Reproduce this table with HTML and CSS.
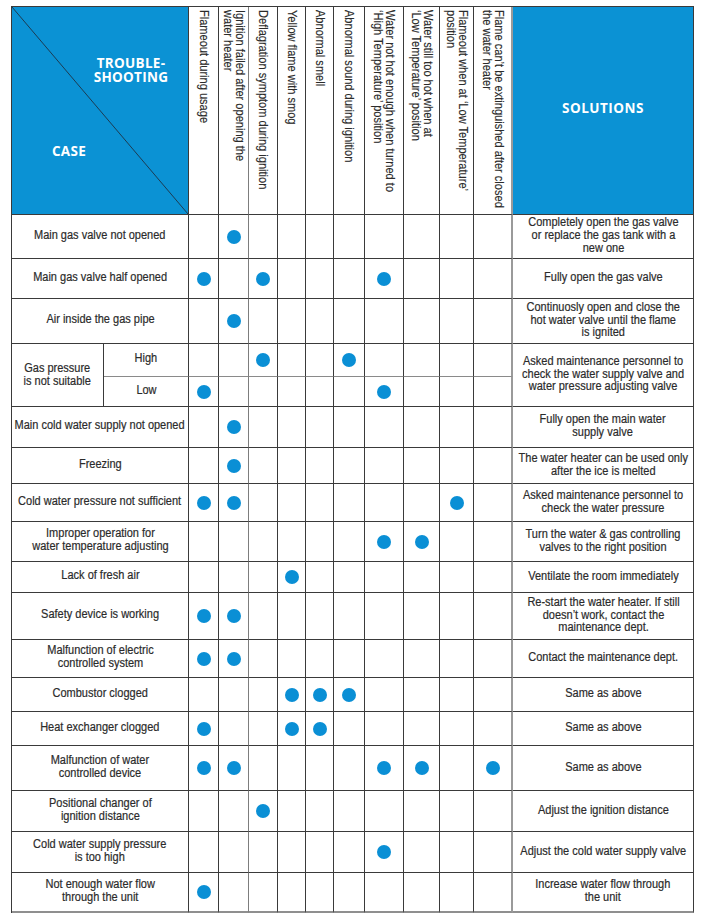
FILE: index.html
```html
<!DOCTYPE html>
<html lang="en">
<head>
<meta charset="utf-8">
<title>Troubleshooting</title>
<link rel="stylesheet" href="styles.css">
</head>
<body>
<div class="chart">
  <div class="corner">
    <svg class="diag" viewBox="0 0 100 100" preserveAspectRatio="none"><line x1="0" y1="0" x2="100" y2="100"/></svg>
    <span class="corner-top">TROUBLE-<br>SHOOTING</span>
    <span class="corner-bottom">CASE</span>
  </div>
  <div class="sym"><span>Flameout during usage</span></div>
  <div class="sym soft"><span>Ignition failed after opening the<br>water heater</span></div>
  <div class="sym"><span>Deflagration symptom during ignition</span></div>
  <div class="sym"><span>Yellow flame with smog</span></div>
  <div class="sym"><span>Abnormal smell</span></div>
  <div class="sym"><span>Abnormal sound during ignition</span></div>
  <div class="sym"><span>Water not hot enough when turned to<br>‘High Temperature’ position</span></div>
  <div class="sym"><span>Water still too hot when at<br>‘Low Temperature’ position</span></div>
  <div class="sym"><span>Flameout when at ‘Low Temperature’<br>position</span></div>
  <div class="sym edge"><span>Flame can’t be extinguished after closed<br>the water heater</span></div>
  <div class="sol-head">SOLUTIONS</div>

  <!-- 1 -->
  <div class="case"><span>Main gas valve not opened</span></div>
  <div class="c"></div><div class="c soft"><i class="dot"></i></div><div class="c"></div><div class="c"></div><div class="c"></div><div class="c"></div><div class="c"></div><div class="c"></div><div class="c"></div><div class="c edge"></div>
  <div class="sol"><span>Completely open the gas valve<br>or replace the gas tank with a<br>new one</span></div>

  <!-- 2 -->
  <div class="case"><span>Main gas valve half opened</span></div>
  <div class="c"><i class="dot"></i></div><div class="c soft"></div><div class="c"><i class="dot"></i></div><div class="c"></div><div class="c"></div><div class="c"></div><div class="c"><i class="dot"></i></div><div class="c"></div><div class="c"></div><div class="c edge"></div>
  <div class="sol"><span>Fully open the gas valve</span></div>

  <!-- 3 -->
  <div class="case"><span>Air inside the gas pipe</span></div>
  <div class="c"></div><div class="c soft"><i class="dot"></i></div><div class="c"></div><div class="c"></div><div class="c"></div><div class="c"></div><div class="c"></div><div class="c"></div><div class="c"></div><div class="c edge"></div>
  <div class="sol"><span>Continuosly open and close the<br>hot water valve until the flame<br>is ignited</span></div>

  <!-- 4 gas pressure -->
  <div class="case-group"><span>Gas pressure<br>is not suitable</span></div>
  <div class="case-sub thin"><span>High</span></div>
  <div class="c thin"></div><div class="c soft thin"></div><div class="c thin"><i class="dot"></i></div><div class="c thin"></div><div class="c thin"></div><div class="c thin"><i class="dot"></i></div><div class="c thin"></div><div class="c thin"></div><div class="c thin"></div><div class="c edge thin"></div>
  <div class="sol sol-span"><span>Asked maintenance personnel to<br>check the water supply valve and<br>water pressure adjusting valve</span></div>
  <div class="case-sub"><span>Low</span></div>
  <div class="c"><i class="dot"></i></div><div class="c soft"></div><div class="c"></div><div class="c"></div><div class="c"></div><div class="c"></div><div class="c"><i class="dot"></i></div><div class="c"></div><div class="c"></div><div class="c edge"></div>

  <!-- 5 -->
  <div class="case"><span>Main cold water supply not opened</span></div>
  <div class="c"></div><div class="c soft"><i class="dot"></i></div><div class="c"></div><div class="c"></div><div class="c"></div><div class="c"></div><div class="c"></div><div class="c"></div><div class="c"></div><div class="c edge"></div>
  <div class="sol"><span>Fully open the main water<br>supply valve</span></div>

  <!-- 6 -->
  <div class="case"><span>Freezing</span></div>
  <div class="c"></div><div class="c soft"><i class="dot"></i></div><div class="c"></div><div class="c"></div><div class="c"></div><div class="c"></div><div class="c"></div><div class="c"></div><div class="c"></div><div class="c edge"></div>
  <div class="sol"><span>The water heater can be used only<br>after the ice is melted</span></div>

  <!-- 7 -->
  <div class="case"><span>Cold water pressure not sufficient</span></div>
  <div class="c"><i class="dot"></i></div><div class="c soft"><i class="dot"></i></div><div class="c"></div><div class="c"></div><div class="c"></div><div class="c"></div><div class="c"></div><div class="c"></div><div class="c"><i class="dot"></i></div><div class="c edge"></div>
  <div class="sol"><span>Asked maintenance personnel to<br>check the water pressure</span></div>

  <!-- 8 -->
  <div class="case"><span>Improper operation for<br>water temperature adjusting</span></div>
  <div class="c"></div><div class="c soft"></div><div class="c"></div><div class="c"></div><div class="c"></div><div class="c"></div><div class="c"><i class="dot"></i></div><div class="c"><i class="dot"></i></div><div class="c"></div><div class="c edge"></div>
  <div class="sol"><span>Turn the water &amp; gas controlling<br>valves to the right position</span></div>

  <!-- 9 -->
  <div class="case"><span>Lack of fresh air</span></div>
  <div class="c"></div><div class="c soft"></div><div class="c"></div><div class="c"><i class="dot"></i></div><div class="c"></div><div class="c"></div><div class="c"></div><div class="c"></div><div class="c"></div><div class="c edge"></div>
  <div class="sol"><span>Ventilate the room immediately</span></div>

  <!-- 10 -->
  <div class="case"><span>Safety device is working</span></div>
  <div class="c"><i class="dot"></i></div><div class="c soft"><i class="dot"></i></div><div class="c"></div><div class="c"></div><div class="c"></div><div class="c"></div><div class="c"></div><div class="c"></div><div class="c"></div><div class="c edge"></div>
  <div class="sol"><span>Re-start the water heater. If still<br>doesn’t work, contact the<br>maintenance dept.</span></div>

  <!-- 11 -->
  <div class="case"><span>Malfunction of electric<br>controlled system</span></div>
  <div class="c"><i class="dot"></i></div><div class="c soft"><i class="dot"></i></div><div class="c"></div><div class="c"></div><div class="c"></div><div class="c"></div><div class="c"></div><div class="c"></div><div class="c"></div><div class="c edge"></div>
  <div class="sol"><span>Contact the maintenance dept.</span></div>

  <!-- 12 -->
  <div class="case"><span>Combustor clogged</span></div>
  <div class="c"></div><div class="c soft"></div><div class="c"></div><div class="c"><i class="dot"></i></div><div class="c"><i class="dot"></i></div><div class="c"><i class="dot"></i></div><div class="c"></div><div class="c"></div><div class="c"></div><div class="c edge"></div>
  <div class="sol"><span>Same as above</span></div>

  <!-- 13 -->
  <div class="case"><span>Heat exchanger clogged</span></div>
  <div class="c"><i class="dot"></i></div><div class="c soft"></div><div class="c"></div><div class="c"><i class="dot"></i></div><div class="c"><i class="dot"></i></div><div class="c"></div><div class="c"></div><div class="c"></div><div class="c"></div><div class="c edge"></div>
  <div class="sol"><span>Same as above</span></div>

  <!-- 14 -->
  <div class="case"><span>Malfunction of water<br>controlled device</span></div>
  <div class="c"><i class="dot"></i></div><div class="c soft"><i class="dot"></i></div><div class="c"></div><div class="c"></div><div class="c"></div><div class="c"></div><div class="c"><i class="dot"></i></div><div class="c"><i class="dot"></i></div><div class="c"></div><div class="c edge"><i class="dot"></i></div>
  <div class="sol"><span>Same as above</span></div>

  <!-- 15 -->
  <div class="case"><span>Positional changer of<br>ignition distance</span></div>
  <div class="c"></div><div class="c soft"></div><div class="c"><i class="dot"></i></div><div class="c"></div><div class="c"></div><div class="c"></div><div class="c"></div><div class="c"></div><div class="c"></div><div class="c edge"></div>
  <div class="sol"><span>Adjust the ignition distance</span></div>

  <!-- 16 -->
  <div class="case"><span>Cold water supply pressure<br>is too high</span></div>
  <div class="c"></div><div class="c soft"></div><div class="c"></div><div class="c"></div><div class="c"></div><div class="c"></div><div class="c"><i class="dot"></i></div><div class="c"></div><div class="c"></div><div class="c edge"></div>
  <div class="sol"><span>Adjust the cold water supply valve</span></div>

  <!-- 17 -->
  <div class="case last"><span>Not enough water flow<br>through the unit</span></div>
  <div class="c last"><i class="dot"></i></div><div class="c soft last"></div><div class="c last"></div><div class="c last"></div><div class="c last"></div><div class="c last"></div><div class="c last"></div><div class="c last"></div><div class="c last"></div><div class="c edge last"></div>
  <div class="sol last"><span>Increase water flow through<br>the unit</span></div>
</div>
</body>
</html>
```

FILE: styles.css
```css
html, body {
  margin: 0;
  padding: 0;
  background: #ffffff;
}

body {
  font-family: "Liberation Sans", Arial, sans-serif;
  color: #2b2b2b;
}

.chart {
  margin: 6px 0 0 11px;
  display: grid;
  grid-template-columns: 92px 85px 30px 30px 29px 28px 28px 31px 39px 36px 34px 39px 181px;
  grid-template-rows: 208px 44px 40px 45px 33px 30px 41px 36px 38px 40px 31px 47px 38px 34px 34px 45px 41px 41px 40px;
  width: max-content;
  border-top: 1px solid #3a3a3a;
  border-left: 1px solid #3a3a3a;
}

.chart > div {
  box-sizing: border-box;
  border-right: 1px solid #3a3a3a;
  border-bottom: 1px solid #3a3a3a;
}

/* header corner */
.corner {
  grid-column: span 2;
  position: relative;
  background: #0b92d4;
  font-family: "Open Sans", "Liberation Sans", sans-serif;
  font-weight: 700;
  color: #ffffff;
  font-size: 13.5px;
  line-height: 14px;
  letter-spacing: 0.3px;
}

.diag {
  position: absolute;
  left: 0;
  top: 0;
  width: 100%;
  height: 100%;
}

.diag line {
  stroke: #1d3b52;
  stroke-width: 1;
  vector-effect: non-scaling-stroke;
}

.corner-top {
  position: absolute;
  left: 78px;
  top: 49px;
  width: 82px;
  text-align: center;
}

.corner-bottom {
  position: absolute;
  left: 27px;
  top: 137px;
  width: 60px;
  text-align: center;
}

.sol-head {
  background: #0b92d4;
  color: #ffffff;
  font-family: "Open Sans", "Liberation Sans", sans-serif;
  font-weight: 700;
  font-size: 13.5px;
  letter-spacing: 0.5px;
  display: flex;
  align-items: center;
  justify-content: center;
  padding-bottom: 5px;
}

/* symptom headers */
.sym {
  display: flex;
  justify-content: center;
  align-items: flex-start;
  padding-top: 3px;
}

.sym span {
  writing-mode: vertical-rl;
  white-space: nowrap;
  font-size: 13px;
  line-height: 12px;
  color: #2b2b2b;
  -webkit-text-stroke: 0.15px #2b2b2b;
  transform: scaleY(0.85);
  transform-origin: center top;
}

/* body cells */
.case,
.case-group,
.case-sub,
.sol {
  display: flex;
  align-items: center;
  justify-content: center;
  text-align: center;
  font-size: 12.5px;
  line-height: 12.7px;
  white-space: nowrap;
}

.case span,
.case-group span,
.case-sub span,
.sol span {
  display: block;
  -webkit-text-stroke: 0.2px #2b2b2b;
  transform: scaleX(0.88);
  transform-origin: center center;
}

.case {
  grid-column: span 2;
  padding-bottom: 3px;
}

.case-group {
  grid-row: span 2;
}

.case-sub {
  padding-bottom: 3px;
}

.sol {
  padding-bottom: 2px;
}

.sol-span {
  grid-row: span 2;
}

.c {
  display: flex;
  align-items: center;
  justify-content: center;
}

.dot {
  display: block;
  width: 14px;
  height: 14px;
  border-radius: 50%;
  background: #0a8fd5;
}

.chart > .soft {
  border-right-color: #7d7d7d;
}

.chart > .edge {
  border-right: 2px solid #9a9a9a;
}

.chart > .thin {
  border-bottom-color: #8a8a8a;
}

.chart > .last {
  border-bottom: 2px solid #8f8f8f;
}
```
